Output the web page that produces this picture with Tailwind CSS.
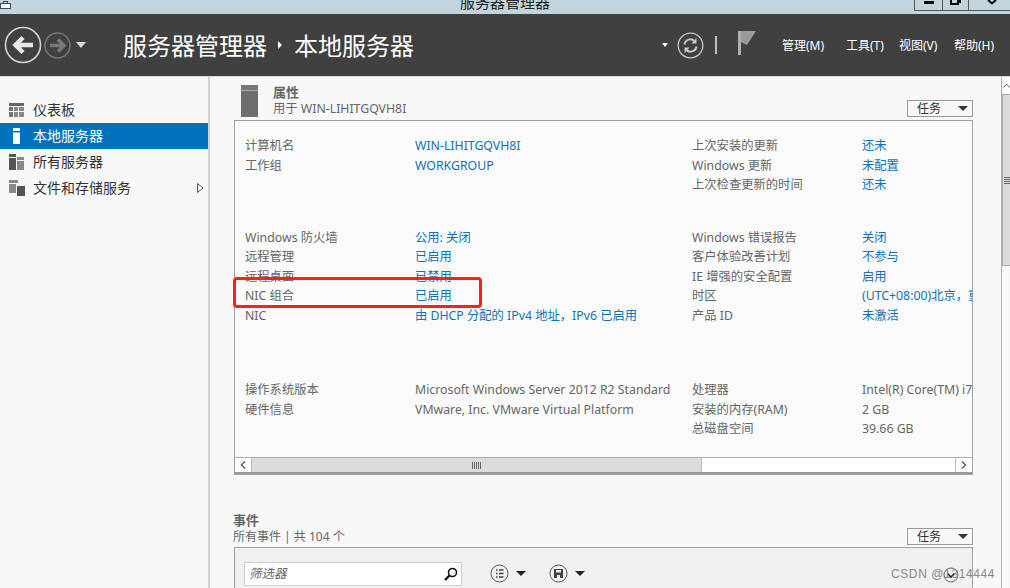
<!DOCTYPE html>
<html><head><meta charset="utf-8"><script src="https://cdn.jsdelivr.net/npm/@tailwindcss/browser@4"></script></head>
<body class="w-[1010px] h-[588px] overflow-hidden bg-[#f8f8f8] relative font-['Noto_Sans','Noto_Sans_CJK_SC',sans-serif] text-[12px]">
<!-- title bar -->
<div class="h-[14px] bg-[#c2d5dc] relative overflow-hidden flex justify-center">
  <span class="text-[15px] leading-[15px] -mt-[5px] text-[#222]">服务器管理器</span>
  <svg class="absolute left-0 top-0" width="11" height="10" viewBox="0 0 11 10"><rect x="0.5" y="3.5" width="10" height="5" fill="#fff" stroke="#446"/><rect x="3.5" y="1.5" width="4" height="2" fill="none" stroke="#446"/></svg>
  <div class="absolute left-[914px] top-0 h-[11px] w-[110px] border border-t-0 border-r-0 border-[#555] flex">
    <div class="w-[28px] border-r border-[#555] flex justify-center"><div class="w-[10px] h-[3px] bg-black mt-[1px]"></div></div>
    <div class="w-[26px] border-r border-[#555] flex justify-center"><div class="w-[9px] h-[5px] border-2 border-t-0 border-black"></div><div class="w-[2px] h-[3px] bg-black"></div></div>
    <div class="w-[46px] flex justify-center"><svg width="10" height="6"><path d="M1 0 L5 3.5 L9 0" stroke="#000" stroke-width="2" fill="none"/></svg></div>
  </div>
</div>
<!-- header -->
<header class="h-[62px] bg-[#404040] flex items-center text-white">
  <svg class="ml-[4px] shrink-0" width="38" height="38" viewBox="0 0 38 38"><circle cx="19" cy="19" r="17.5" fill="none" stroke="#d4d4d4" stroke-width="1.6"/><path d="M29 19H13M19 11.5L11.5 19L19 26.5" fill="none" stroke="#e8e8e8" stroke-width="4.5"/></svg>
  <svg class="ml-[2px] shrink-0" width="27" height="27" viewBox="0 0 27 27"><circle cx="13.5" cy="13.5" r="12.5" fill="none" stroke="#777" stroke-width="1.5"/><path d="M6 13.5H19M14 7.5L20 13.5L14 19.5" fill="none" stroke="#777" stroke-width="3.5"/></svg>
  <div class="ml-[5px] w-0 h-0 border-x-[5px] border-x-transparent border-t-[6px] border-t-[#d8d8d8]"></div>
  <div class="ml-[37px] mt-[2px] text-[24px] leading-none text-white">服务器管理器</div>
  <div class="ml-[11px] w-0 h-0 border-y-[4px] border-y-transparent border-l-[4px] border-l-white"></div>
  <div class="ml-[12px] mt-[2px] text-[24px] leading-none text-white">本地服务器</div>
  <div class="ml-auto w-0 h-0 border-x-[3.5px] border-x-transparent border-t-[4px] border-t-white"></div>
  <svg class="ml-[9px]" width="27" height="27" viewBox="0 0 27 27"><circle cx="13.5" cy="13.5" r="12.3" fill="none" stroke="#c8c8c8" stroke-width="1.3"/><path d="M7.5 12.5A6 6 0 0 1 18 9.5M19.5 14.5A6 6 0 0 1 9 17.5" fill="none" stroke="#c8c8c8" stroke-width="2"/><path d="M19.5 6V11.5H14.5ZM7.5 21V15.5H12.5Z" fill="#c8c8c8"/></svg>
  <div class="ml-[11px] w-[2px] h-[18px] bg-[#c0c0c0]"></div>
  <svg class="ml-[21px] -mt-[4px]" width="19" height="24" viewBox="0 0 19 24"><path d="M0 0H3V24H0Z" fill="#b0b0b0"/><path d="M3 0H18L9 14L3 11Z" fill="#9a9a9a"/></svg>
  <div class="ml-[25px] mt-[2px] w-[64px]">管理(M)</div>
  <div class="mt-[2px] w-[53px]">工具(T)</div>
  <div class="mt-[2px] w-[55px]">视图(V)</div>
  <div class="mt-[2px] w-[55px] mr-[1px]">帮助(H)</div>
</header>
<div class="h-[1px] bg-[#d8d8d8]"></div>
<div class="flex h-[511px]">
  <!-- sidebar -->
  <aside class="w-[208px] shrink-0 pt-[20px] bg-[#f8f8f8] text-[#333] text-[14px]">
    <div class="h-[26px] flex items-center pl-[9px] gap-[9px]">
      <svg width="15" height="14" viewBox="0 0 15 14" fill="#666"><rect width="15" height="3"/><rect y="4" width="4" height="4" fill="#777"/><rect x="5" y="4" width="4" height="4" fill="#888"/><rect x="10" y="4" width="5" height="4" fill="#888"/><rect y="9" width="4" height="5" fill="#777"/><rect x="5" y="9" width="4" height="5" fill="#888"/><rect x="10" y="9" width="5" height="5" fill="#888"/></svg>
      <span class="-mt-[2px]">仪表板</span></div>
    <div class="h-[26px] flex items-center pl-[13px] gap-[13px] bg-[#0072bc] text-white">
      <svg width="7" height="16" viewBox="0 0 7 16" fill="#fff"><rect width="7" height="3"/><rect y="4.5" width="7" height="11.5"/></svg>
      <span class="-mt-[2px]">本地服务器</span></div>
    <div class="h-[26px] flex items-center pl-[9px] gap-[9px]">
      <svg width="15" height="16" viewBox="0 0 15 16"><rect width="7" height="3" fill="#555"/><rect y="4" width="7" height="12" fill="#555"/><rect x="8" y="3" width="7" height="3" fill="#888"/><rect x="8" y="7" width="7" height="9" fill="#888"/></svg>
      <span class="-mt-[2px]">所有服务器</span></div>
    <div class="h-[26px] flex items-center pl-[9px] gap-[8px] relative">
      <svg width="16" height="16" viewBox="0 0 16 16"><rect width="9" height="3" fill="#888"/><rect y="4" width="7" height="9" fill="#888"/><rect x="8" y="6" width="8" height="10" fill="#555"/></svg>
      <span class="-mt-[2px]">文件和存储服务</span>
      <svg class="absolute left-[197px] top-[8px]" width="7" height="10" viewBox="0 0 7 10"><path d="M.5.5L6 5L.5 9.5Z" fill="#fff" stroke="#555"/></svg>
    </div>
  </aside>
  <div class="w-[2px] bg-[#d2d2d2]"></div>
  <!-- main -->
  <main class="w-[791px] shrink-0 relative overflow-hidden pl-[24px] pr-[28px]">
    <section class="h-[43px] flex items-start relative">
      <div class="ml-[7px] mt-[8px] w-[17px] h-[32px] bg-[#6e6e6e] border-t-[5px] border-[#777] shadow-[inset_0_1px_0_#aaa]"></div>
      <div class="ml-[15px] mt-[6px]">
        <div class="text-[13px] leading-[18px] font-bold text-[#666]">属性</div>
        <div class="text-[12.3px] leading-[16px] text-[#666]">用于 WIN-LIHITGQVH8I</div>
      </div>
      <div class="absolute right-0 top-[23px] w-[66px] h-[17px] border border-[#999] flex items-center pl-[9px] text-[#333]">任务<div class="ml-auto mr-[4px] w-0 h-0 border-x-[5px] border-x-transparent border-t-[5px] border-t-[#333]"></div></div>
    </section>
    <section class="h-[355px] border border-[#a0a0a0] bg-[#fafafa] relative overflow-hidden">
      <div class="h-[336px] pl-[10px] pt-[15px] grid grid-cols-[170px_277px_170px_110px] content-start text-[12.3px] leading-[19.5px] text-[#666] whitespace-nowrap overflow-hidden">
        <div>计算机名<br>工作组</div>
        <div class="text-[#0f72ba]">WIN-LIHITGQVH8I<br>WORKGROUP</div>
        <div>上次安装的更新<br>Windows 更新<br>上次检查更新的时间</div>
        <div class="text-[#0f72ba]">还未<br>未配置<br>还未</div>

        <div class="mt-[33px]">Windows 防火墙<br>远程管理<br>远程桌面<br>NIC 组合<br>NIC</div>
        <div class="mt-[33px] text-[#0f72ba]">公用: 关闭<br>已启用<br>已禁用<br>已启用<br>由 DHCP 分配的 IPv4 地址，IPv6 已启用</div>
        <div class="mt-[33px]">Windows 错误报告<br>客户体验改善计划<br>IE 增强的安全配置<br>时区<br>产品 ID</div>
        <div class="mt-[33px] text-[#0f72ba]">关闭<br>不参与<br>启用<br>(UTC+08:00)北京，重庆，香港<br>未激活</div>

        <div class="mt-[55px]">操作系统版本<br>硬件信息</div>
        <div class="mt-[55px]">Microsoft Windows Server 2012 R2 Standard<br>VMware, Inc. VMware Virtual Platform</div>
        <div class="mt-[55px]">处理器<br>安装的内存(RAM)<br>总磁盘空间</div>
        <div class="mt-[55px]">Intel(R) Core(TM) i7-8750H<br>2 GB<br>39.66 GB</div>
      </div>
      <div class="absolute left-0 right-0 bottom-0 h-[17px] border-t border-[#b0b0b0] border-b-2 border-b-[#999] flex bg-white">
        <div class="w-[17px] border-r border-[#bbb] flex items-center justify-center"><svg width="6" height="8"><path d="M5 .5L1.5 4L5 7.5" stroke="#555" fill="none" stroke-width="1.3"/></svg></div>
        <div class="w-[450px] bg-[#dcdcdc] flex items-center justify-center border-r border-[#bbb]"><div class="w-[9px] h-[7px] bg-[repeating-linear-gradient(90deg,#666_0,#666_1px,transparent_1px,transparent_2px)]"></div></div>
        <div class="flex-1"></div>
        <div class="w-[17px] border-l border-[#bbb] flex items-center justify-center"><svg width="6" height="8"><path d="M1 .5L4.5 4L1 7.5" stroke="#555" fill="none" stroke-width="1.3"/></svg></div>
      </div>
    </section>
    <section class="mt-[37px] h-[36px] relative">
      <div class="-ml-[1px] -mt-[1px] text-[13px] leading-[18px] font-bold text-[#666]">事件</div>
      <div class="-ml-[1px] text-[12px] leading-[16px] text-[#666]">所有事件 | 共 104 个</div>
      <div class="absolute right-0 top-[17px] w-[66px] h-[17px] border border-[#999] flex items-center pl-[9px] text-[#333]">任务<div class="ml-auto mr-[4px] w-0 h-0 border-x-[5px] border-x-transparent border-t-[5px] border-t-[#333]"></div></div>
    </section>
    <section class="h-[60px] border border-[#a0a0a0] bg-[#f0f0f0] pl-[9px] pt-[14px] flex items-start">
      <div class="w-[218px] h-[24px] bg-white border border-[#ccc] flex items-center pl-[4px] pr-[3px] italic text-[12.5px] text-[#666]">筛选器
        <svg class="ml-auto" width="14" height="14" viewBox="0 0 14 14"><circle cx="8.5" cy="5.5" r="4" fill="none" stroke="#111" stroke-width="1.6"/><path d="M5.5 8.5L1 13" stroke="#111" stroke-width="2.4"/></svg></div>
      <svg class="ml-[28px] mt-[2px]" width="19" height="19" viewBox="0 0 19 19"><circle cx="9.5" cy="9.5" r="8.5" fill="none" stroke="#555"/><path d="M6 6h1.5M6 9.5h1.5M6 13h1.5M9 6h4.5M9 9.5h4.5M9 13h4.5" stroke="#444" stroke-width="1.5"/></svg>
      <div class="ml-[7px] mt-[9px] w-0 h-0 border-x-[5px] border-x-transparent border-t-[5px] border-t-[#222]"></div>
      <svg class="ml-[23px] mt-[2px]" width="19" height="19" viewBox="0 0 19 19"><circle cx="9.5" cy="9.5" r="8.5" fill="none" stroke="#555"/><path d="M5 5h9v9H5z" fill="#444"/><rect x="7" y="6" width="5" height="2.5" fill="#eee"/><rect x="8" y="11" width="3" height="3" fill="#eee"/></svg>
      <div class="ml-[7px] mt-[9px] w-0 h-0 border-x-[5px] border-x-transparent border-t-[5px] border-t-[#222]"></div>
      <svg class="absolute left-[733px] top-[490px]" width="16" height="16" viewBox="0 0 16 16"><circle cx="8" cy="8" r="7" fill="none" stroke="#666"/><path d="M4.5 6.5L8 10L11.5 6.5" fill="none" stroke="#222" stroke-width="1.6"/></svg>
    </section>
  </main>
  <!-- vertical scrollbar -->
  <div class="w-[9px] border-l border-[#b0b0b0] bg-[#f8f8f8] flex flex-col">
    <div class="h-[17px] bg-white flex items-center justify-center"><svg width="7" height="5"><path d="M.5 4.5L3.5 1L6.5 4.5" stroke="#555" fill="none"/></svg></div>
    <div class="h-[172px] bg-[#dcdcdc] border-y border-l border-[#aaa] flex items-center justify-center"><div class="w-[6px] h-[7px] bg-[repeating-linear-gradient(0deg,#666_0,#666_1px,transparent_1px,transparent_2px)]"></div></div>
    <div class="flex-1 bg-[#f8f8f8]"></div>
  </div>
</div>
<!-- annotation -->
<div class="absolute left-[233px] top-[277px] w-[249px] h-[31px] border-[3px] border-[#ff2016] rounded-[4px]"></div>
<div class="absolute left-[891px] top-[565px] text-[12px] leading-[18px] text-[#888] font-['Liberation_Sans',sans-serif] tracking-[0.6px]">CSDN @1314444</div>
</body></html>
